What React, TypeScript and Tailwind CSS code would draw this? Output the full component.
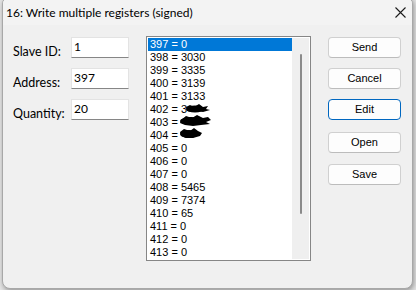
import { memo } from 'react'

const ROWS: { key: string; text: string }[] = [
  { key: '397', text: '397 = 0' },
  { key: '398', text: '398 = 3030' },
  { key: '399', text: '399 = 3335' },
  { key: '400', text: '400 = 3139' },
  { key: '401', text: '401 = 3133' },
  { key: '402', text: '402 = 3' },
  { key: '403', text: '403 =' },
  { key: '404', text: '404 =' },
  { key: '405', text: '405 = 0' },
  { key: '406', text: '406 = 0' },
  { key: '407', text: '407 = 0' },
  { key: '408', text: '408 = 5465' },
  { key: '409', text: '409 = 7374' },
  { key: '410', text: '410 = 65' },
  { key: '411', text: '411 = 0' },
  { key: '412', text: '412 = 0' },
  { key: '413', text: '413 = 0' }
]

const FIELDS = [
  { label: 'Slave ID:', value: '1' },
  { label: 'Address:', value: '397' },
  { label: 'Quantity:', value: '20' }
]

const BUTTONS = [
  { label: 'Send', mt: 'mt-0', focused: false },
  { label: 'Cancel', mt: 'mt-[10px]', focused: false },
  { label: 'Edit', mt: 'mt-[10px]', focused: true },
  { label: 'Open', mt: 'mt-[12px]', focused: false },
  { label: 'Save', mt: 'mt-[11px]', focused: false }
]

// hand scribbles that hide a few of the values
const Scribble = () => (
  <svg className="absolute left-[30px] top-[67px]" width="40" height="40" viewBox="0 0 40 40">
    <g fill="#000">
      <ellipse cx="18" cy="5" rx="9" ry="3.5" />
      <path d="M9 3 L13 1 L17 3 L22 0 L26 3 L31 2 L29 5 L33 6 L26 8 L20 7 L14 8 L10 7 Z" />
      <ellipse cx="14" cy="17" rx="11" ry="4" />
      <path d="M4 16 L9 12 L15 14 L20 11 L26 14 L31 13 L34 16 L29 18 L33 20 L24 21 L16 22 L8 21 L3 19 Z" />
      <ellipse cx="12" cy="30" rx="9" ry="4" />
      <path d="M3 28 L7 25 L13 27 L17 24 L21 27 L25 29 L23 32 L16 34 L9 34 L4 32 Z" />
    </g>
  </svg>
)

const CloseIcon = () => (
  <svg width="11" height="11" viewBox="0 0 11 11" fill="none" stroke="#1b1b1b" strokeWidth="1.1">
    <path d="M0.5 0.5 L10.5 10.5 M10.5 0.5 L0.5 10.5" />
  </svg>
)

export const App = memo(() => {
  return (
    <div className="w-[416px] h-[290px] overflow-hidden bg-[#e4e4e4]">
      <div
        className="ml-[2px] mt-[-4px] w-[411px] h-[293px] rounded-[8px] border border-[#a8a8a8] bg-[#f0f0f0] shadow-[1px_2px_5px_rgba(0,0,0,0.35)] overflow-hidden flex flex-col"
        style={{ fontFamily: 'Lato, "Noto Sans", sans-serif' }}
      >
        <div className="h-[28px] shrink-0 bg-[#f3f3f3] flex items-center pt-[3px] pl-[3px] pr-[6px]">
          <span className="text-[12px] text-black">16: Write multiple registers (signed)</span>
          <div className="ml-auto pb-[1px]">
            <CloseIcon />
          </div>
        </div>

        <div className="flex items-start">
          <div className="pl-[10px] pt-[12px] flex flex-col gap-[10px]">
            {FIELDS.map((f) => (
              <div key={f.label} className="flex h-[21px]">
                <span className="w-[58px] pt-[8px] text-[12.5px] leading-[14px] text-black">{f.label}</span>
                <div className="w-[58px] h-[21px] bg-white border border-[#e3e3e3] border-b-[#868686] pl-[2px] pt-[2px] text-[12px] leading-[14px] text-black">
                  {f.value}
                </div>
              </div>
            ))}
          </div>

          <div
            className="relative ml-[17px] mt-[11px] w-[165px] h-[225px] border border-[#868686] bg-white p-[1px] flex"
            style={{ fontFamily: '"Liberation Sans", Arial, sans-serif' }}
          >
            <div className="w-[145px] flex flex-col">
              {ROWS.map((r, i) => (
                <div
                  key={r.key}
                  className={`h-[13px] pl-[2px] text-[11px] leading-[13px] whitespace-nowrap ${
                    i === 0 ? 'bg-[#0078d7] text-white' : 'text-black'
                  }`}
                >
                  {r.text}
                </div>
              ))}
            </div>
            <div className="w-[17px] bg-[#efefef] flex justify-center">
              <div className="mt-[16px] w-[2px] h-[160px] rounded-full bg-[#8a8a8a]" />
            </div>
            <Scribble />
          </div>

          <div
            className="ml-[17px] mt-[12px] flex flex-col"
            style={{ fontFamily: '"Liberation Sans", Arial, sans-serif' }}
          >
            {BUTTONS.map((b) => (
              <button
                key={b.label}
                className={`${b.mt} w-[73px] h-[21px] rounded-[4px] bg-[#fdfdfd] text-[11px] leading-[13px] text-black flex items-center justify-center border ${
                  b.focused ? 'border-[#0067c0]' : 'border-[#d0d0d0] border-b-[#bcbcbc]'
                }`}
              >
                {b.label}
              </button>
            ))}
          </div>
        </div>
      </div>
    </div>
  )
})
App.displayName = 'App'

export default App
